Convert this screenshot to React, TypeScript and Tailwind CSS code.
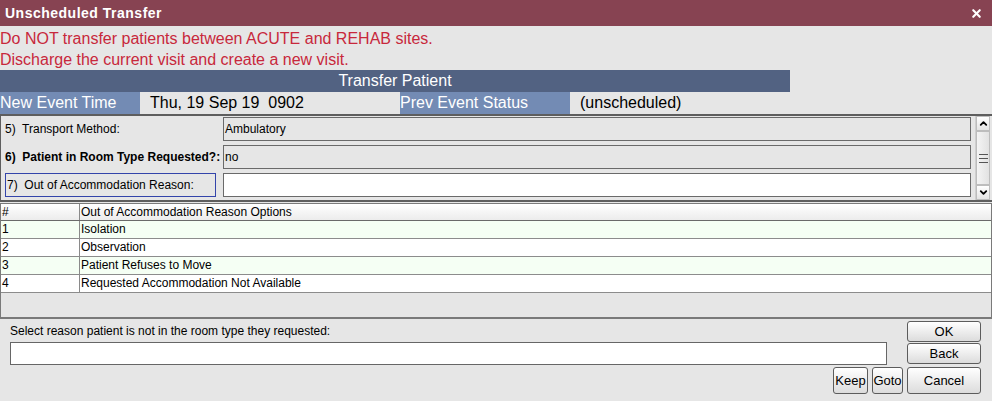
import { ChevronDown, ChevronUp, X } from "lucide-react";

const reasons = [
  "Isolation",
  "Observation",
  "Patient Refuses to Move",
  "Requested Accommodation Not Available",
];

function Btn({ label, className }: { label: string; className: string }) {
  return (
    <button
      className={`flex items-center justify-center rounded-[3px] border border-[#5c5c5c] bg-gradient-to-b from-white to-[#dcdcdc] text-[13px] text-black ${className}`}
    >
      {label}
    </button>
  );
}

export default function App() {
  return (
    <div className="h-[401px] w-[992px] overflow-hidden bg-[#e6e6e6] font-['Liberation_Sans',Arial,sans-serif]">
      {/* title bar */}
      <div className="flex h-[26px] items-center justify-between bg-[#874352] pl-[5px] pr-[9px]">
        <span className="text-[14px] font-bold tracking-[0.5px] text-white">
          Unscheduled Transfer
        </span>
        <X className="h-[13px] w-[13px] text-white" strokeWidth={4} />
      </div>

      <div className="pt-[2px] text-[16px] leading-[21px] text-[#c8283c]">
        <p>Do NOT transfer patients between ACUTE and REHAB sites.</p>
        <p>Discharge the current visit and create a new visit.</p>
      </div>

      <div className="flex h-[22px] w-[790px] items-center justify-center bg-[#526282] text-[16px] text-white">
        Transfer Patient
      </div>

      <div className="flex h-[22px] items-center text-[16px]">
        <div className="flex h-full w-[140px] items-center bg-[#738bb4] text-white">
          New Event Time
        </div>
        <div className="flex h-full w-[260px] items-center pl-[10px] text-black">
          Thu, 19 Sep 19&nbsp;&nbsp;0902
        </div>
        <div className="flex h-full w-[170px] items-center bg-[#738bb4] text-white">
          Prev Event Status
        </div>
        <div className="flex h-full items-center pl-[10px] text-black">
          (unscheduled)
        </div>
      </div>

      {/* form panel */}
      <div className="flex h-[88px] border-y-2 border-l border-[#5e5e5e] text-[12px]">
        <div className="flex flex-1 flex-col gap-[4px] pt-[1px] pr-[4px]">
          <div className="flex h-[24px] items-center">
            <span className="w-[222px] pl-[4px]">5)&nbsp; Transport Method:</span>
            <div className="flex h-full flex-1 items-center border border-[#6a6a6a] bg-[#e6e6e6] pl-[1px]">
              Ambulatory
            </div>
          </div>
          <div className="flex h-[24px] items-center">
            <span className="w-[222px] pl-[4px] font-bold">
              6)&nbsp; Patient in Room Type Requested?:
            </span>
            <div className="flex h-full flex-1 items-center border border-[#6a6a6a] bg-[#e6e6e6] pl-[1px]">
              no
            </div>
          </div>
          <div className="flex h-[24px] items-center">
            <div className="ml-[4px] mr-[7px] flex h-full w-[211px] items-center border border-[#3344aa] pl-[1px]">
              7)&nbsp; Out of Accommodation Reason:
            </div>
            <div className="h-full flex-1 border border-[#6a6a6a] bg-white" />
          </div>
        </div>
        <div className="mr-[2px] flex w-[15px] flex-col border-l border-[#cfcfcf] bg-[#ececec]">
          <div className="flex h-[15px] items-center justify-center border border-[#bdbdbd] bg-gradient-to-b from-white to-[#e4e4e4]">
            <ChevronUp className="h-[11px] w-[11px]" strokeWidth={4} />
          </div>
          <div className="flex flex-1 items-center justify-center border border-[#bdbdbd] bg-gradient-to-r from-[#f4f4f4] to-[#e2e2e2]">
            <div className="flex flex-col gap-[3px]">
              <div className="h-px w-[9px] bg-[#555]" />
              <div className="h-px w-[9px] bg-[#555]" />
              <div className="h-px w-[9px] bg-[#555]" />
            </div>
          </div>
          <div className="flex h-[15px] items-center justify-center border border-[#bdbdbd] bg-gradient-to-b from-white to-[#e4e4e4]">
            <ChevronDown className="h-[11px] w-[11px]" strokeWidth={4} />
          </div>
        </div>
      </div>

      {/* options table */}
      <div className="mt-px flex h-[116px] flex-col border border-b-2 border-[#7a7a7a] text-[12px]">
        <div className="flex h-[17px] border-b border-[#6a6a6a] bg-gradient-to-b from-white to-[#ececec]">
          <div className="w-[79px] border-r border-[#8a8a8a] pl-[1px] leading-[16px]">#</div>
          <div className="pl-[1px] leading-[16px]">Out of Accommodation Reason Options</div>
        </div>
        {reasons.map((r, i) => (
          <div
            key={r}
            className={`flex h-[18px] border-b border-[#8c8c8c] ${i % 2 === 0 ? "bg-[#f5fff4]" : "bg-white"}`}
          >
            <div className="w-[79px] border-r border-[#8a8a8a] pl-[1px] leading-[17px]">{i + 1}</div>
            <div className="pl-[1px] leading-[17px]">{r}</div>
          </div>
        ))}
        <div className="flex-1 bg-[#e6e6e6]" />
      </div>

      {/* bottom */}
      <div className="flex text-[12px]">
        <div className="flex min-w-0 flex-1 flex-col pl-[10px] pt-[5px]">
          <span className="leading-[15px]">
            Select reason patient is not in the room type they requested:
          </span>
          <div className="mt-[3px] h-[23px] w-[877px] border border-[#666] bg-white" />
        </div>
        <div className="mr-[11px] flex w-[74px] shrink-0 flex-col gap-px pt-[2px]">
          <Btn label="OK" className="h-[21px] w-[74px]" />
          <Btn label="Back" className="h-[21px] w-[74px]" />
        </div>
      </div>
      <div className="mt-[2px] flex justify-end gap-[4px] pr-[11px]">
        <Btn label="Keep" className="h-[27px] w-[35px]" />
        <Btn label="Goto" className="h-[27px] w-[31px]" />
        <Btn label="Cancel" className="h-[27px] w-[74px]" />
      </div>
    </div>
  );
}
